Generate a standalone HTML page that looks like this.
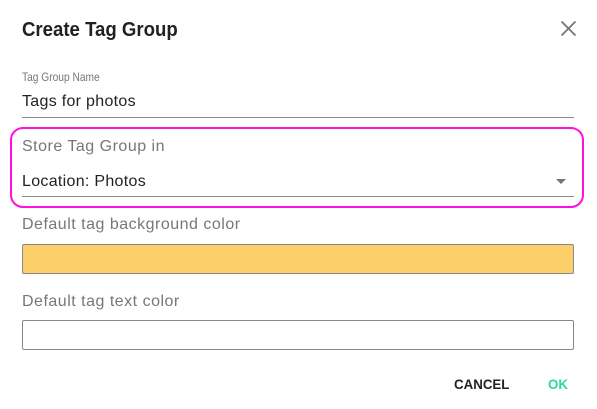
<!DOCTYPE html>
<html><head><style>
body{margin:0;width:597px;height:409px;background:#fff;font-family:"Liberation Sans",sans-serif;position:relative;overflow:hidden}
.a{position:absolute;white-space:nowrap}
.f{font-size:16px;letter-spacing:0.5px}
</style></head><body>
<div class="a" style="left:22px;top:19px;font-size:20px;font-weight:bold;color:#212121;transform-origin:0 0;transform:scaleX(0.93)">Create Tag Group</div>
<svg class="a" style="left:560px;top:20px" width="17" height="17" viewBox="0 0 17 17"><path d="M1.5 1.5L15.5 15.5M15.5 1.5L1.5 15.5" stroke="#757575" stroke-width="1.8"/></svg>
<div class="a" style="left:22px;top:70px;font-size:12px;color:#777;transform-origin:0 0;transform:scaleX(0.85)">Tag Group Name</div>
<div class="a f" style="left:22px;top:93px;color:#222;letter-spacing:0.3px">Tags for photos</div>
<div class="a" style="left:22px;top:117px;width:552px;height:1px;background:#8a8a8a"></div>
<div class="a" style="left:10px;top:127px;width:570px;height:77px;border:2.5px solid #ff10e0;border-radius:13px"></div>
<div class="a f" style="left:22px;top:138px;color:#777">Store Tag Group in</div>
<div class="a f" style="left:22px;top:173px;color:#222;letter-spacing:0.3px">Location: Photos</div>
<svg class="a" style="left:556px;top:179px" width="11" height="6"><path d="M0 0L10 0L5 5Z" fill="#757575"/></svg>
<div class="a" style="left:22px;top:196px;width:552px;height:1px;background:#8a8a8a"></div>
<div class="a f" style="left:22px;top:216px;color:#777">Default tag background color</div>
<div class="a" style="left:22px;top:244px;width:550px;height:28px;background:#fdcf6a;border:1px solid #888;border-radius:2px"></div>
<div class="a f" style="left:22px;top:293px;color:#777">Default tag text color</div>
<div class="a" style="left:22px;top:320px;width:550px;height:28px;background:#fff;border:1px solid #888;border-radius:2px"></div>
<div class="a" style="left:454px;top:376px;font-size:14px;font-weight:bold;color:#222;transform-origin:0 0;transform:scaleX(0.95)">CANCEL</div>
<div class="a" style="left:548px;top:376px;font-size:14px;font-weight:bold;color:#2ed8a0;transform-origin:0 0;transform:scaleX(0.95)">OK</div>
</body></html>
